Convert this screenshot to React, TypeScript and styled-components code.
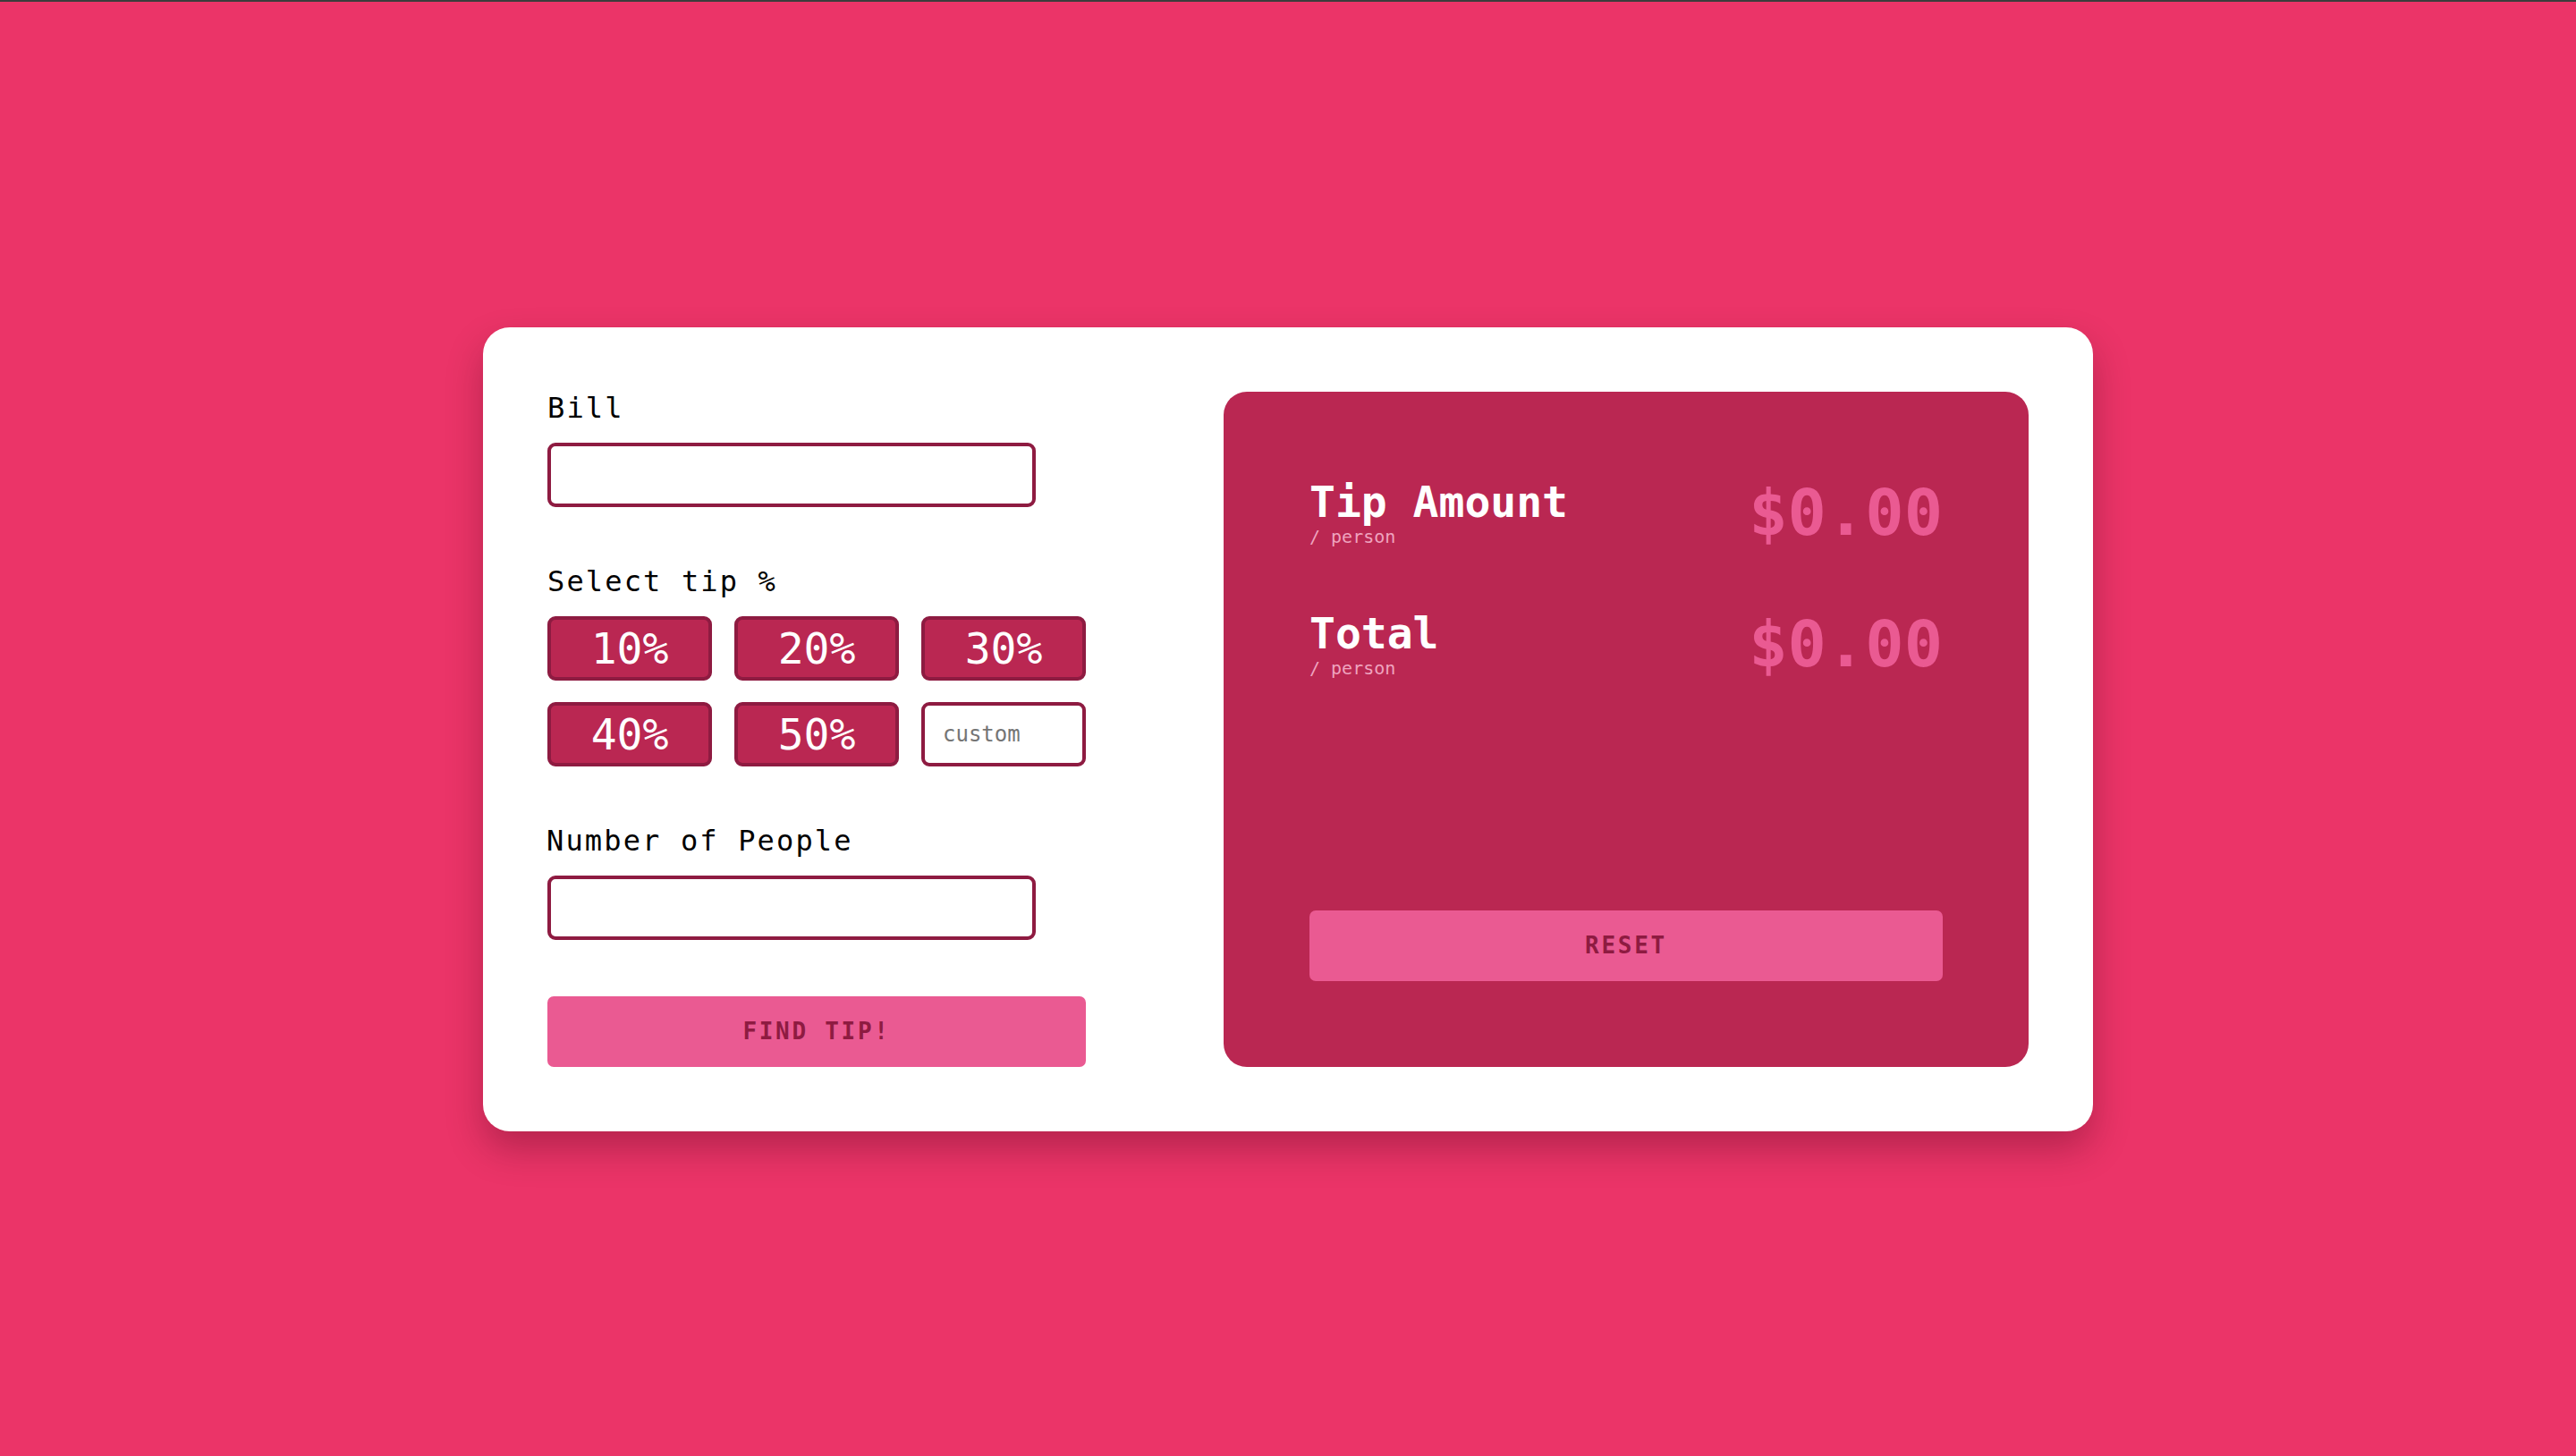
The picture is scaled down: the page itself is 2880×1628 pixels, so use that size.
import React from "react";
import styled, { createGlobalStyle } from "styled-components";

const GlobalStyle = createGlobalStyle`
  * { box-sizing: border-box; }
  html, body { margin: 0; padding: 0; }
  body {
    background: #eb3468;
    border-top: 2px solid #3c3c3c;
    font-family: "DejaVu Sans Mono", "Liberation Mono", monospace;
  }
`;

const Page = styled.main`
  min-height: calc(100vh - 2px);
  display: flex;
  align-items: center;
  justify-content: center;
`;

const Card = styled.section`
  width: 1800px;
  background: #ffffff;
  border-radius: 30px;
  padding: 72px;
  display: flex;
  justify-content: space-between;
  box-shadow: 0 20px 40px rgba(60, 0, 20, 0.3);
`;

const FormColumn = styled.div`
  width: 603px;
  display: flex;
  flex-direction: column;
`;

const Field = styled.div<{ $gapAfter?: number }>`
  display: flex;
  flex-direction: column;
  gap: 20px;
  margin-bottom: ${(p) => p.$gapAfter ?? 65}px;
`;

const Label = styled.label<{ $shift?: number }>`
  font-size: 32px;
  line-height: 37px;
  letter-spacing: 2.15px;
  color: #000;
  margin-left: ${(p) => p.$shift ?? 0}px;
`;

const TextInput = styled.input`
  width: 546px;
  height: 72px;
  border: 4px solid #8e1b41;
  border-radius: 9px;
  background: #fff;
  font-family: inherit;
  font-size: 28px;
  padding: 0 20px;
  outline: none;
`;

const TipGrid = styled.div`
  display: grid;
  grid-template-columns: repeat(3, 184px);
  grid-auto-rows: 72px;
  column-gap: 25px;
  row-gap: 24px;
`;

const TipButton = styled.button`
  background: #ba2752;
  border: 4px solid #8e1b41;
  border-radius: 9px;
  color: #fff;
  font-family: inherit;
  font-size: 48px;
  line-height: 1;
  padding: 0;
  cursor: pointer;
  display: flex;
  align-items: center;
  justify-content: center;
`;

const CustomInput = styled.input`
  width: 184px;
  height: 72px;
  border: 4px solid #8e1b41;
  border-radius: 9px;
  background: #fff;
  font-family: inherit;
  font-size: 24px;
  padding: 0 20px;
  outline: none;
  &::placeholder {
    color: #757575;
  }
`;

const ActionButton = styled.button<{ $full?: boolean }>`
  width: ${(p) => (p.$full ? "100%" : "602px")};
  height: 79px;
  border: none;
  border-radius: 7px;
  background: #ea5a92;
  color: #8e1b41;
  font-family: inherit;
  font-weight: bold;
  font-size: 26px;
  letter-spacing: 2.7px;
  cursor: pointer;
`;

const ResultPanel = styled.div`
  width: 900px;
  background: #ba2752;
  border-radius: 26px;
  padding: 92px 96px 96px;
  display: flex;
  flex-direction: column;
  justify-content: space-between;
`;

const Results = styled.div`
  display: flex;
  flex-direction: column;
  gap: 61px;
`;

const ResultRow = styled.div`
  display: flex;
  align-items: center;
  justify-content: space-between;
`;

const ResultLabel = styled.div`
  display: flex;
  flex-direction: column;
`;

const ResultTitle = styled.span`
  color: #fff;
  font-weight: bold;
  font-size: 48px;
  line-height: 56px;
`;

const PerPerson = styled.span`
  color: #efa3bf;
  font-size: 20px;
  line-height: 23px;
`;

const Amount = styled.span`
  color: #ea5a92;
  font-weight: bold;
  font-size: 72px;
  line-height: 86px;
`;

const tips = ["10%", "20%", "30%", "40%", "50%"];

export default function App() {
  return (
    <>
      <GlobalStyle />
      <Page>
        <Card>
          <FormColumn>
            <Field>
              <Label htmlFor="bill">Bill</Label>
              <TextInput id="bill" type="text" />
            </Field>
            <Field>
              <Label>Select tip %</Label>
              <TipGrid>
                {tips.map((t) => (
                  <TipButton key={t}>{t}</TipButton>
                ))}
                <CustomInput type="text" placeholder="custom" />
              </TipGrid>
            </Field>
            <Field $gapAfter={63}>
              <Label htmlFor="people" $shift={-1}>
                Number of People
              </Label>
              <TextInput id="people" type="text" />
            </Field>
            <ActionButton>FIND TIP!</ActionButton>
          </FormColumn>
          <ResultPanel>
            <Results>
              <ResultRow>
                <ResultLabel>
                  <ResultTitle>Tip Amount</ResultTitle>
                  <PerPerson>/ person</PerPerson>
                </ResultLabel>
                <Amount>$0.00</Amount>
              </ResultRow>
              <ResultRow>
                <ResultLabel>
                  <ResultTitle>Total</ResultTitle>
                  <PerPerson>/ person</PerPerson>
                </ResultLabel>
                <Amount>$0.00</Amount>
              </ResultRow>
            </Results>
            <ActionButton $full>RESET</ActionButton>
          </ResultPanel>
        </Card>
      </Page>
    </>
  );
}
